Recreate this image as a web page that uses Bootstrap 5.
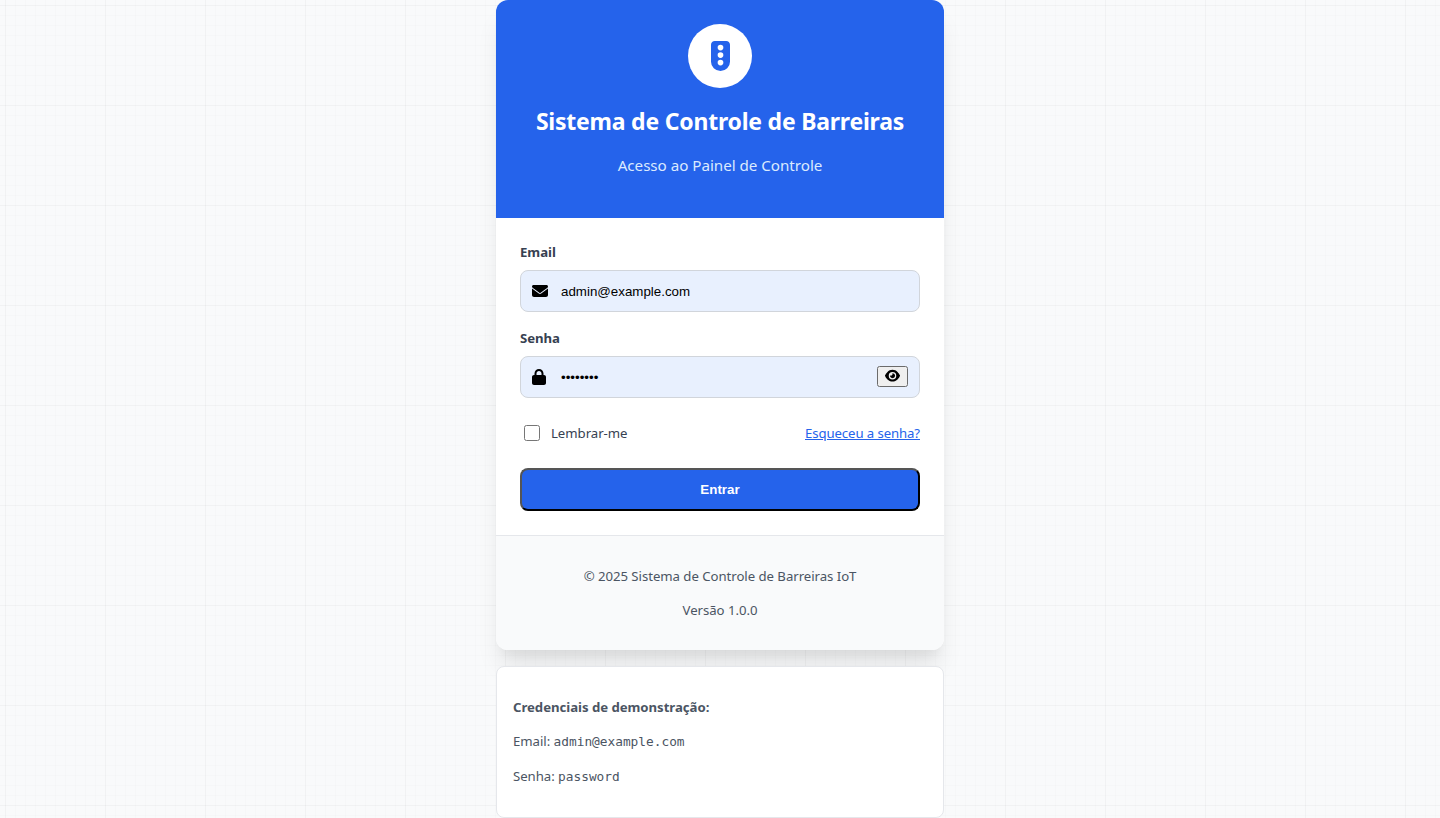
<!DOCTYPE html>
<html lang="pt-BR">
<head>
<meta charset="utf-8">
<meta name="viewport" content="width=device-width, initial-scale=1">
<title>Login - Sistema de Controle de Barreiras</title>
<link href="https://cdn.jsdelivr.net/npm/bootstrap@5.3.0/dist/css/bootstrap.min.css" rel="stylesheet">
<style>
  body {
    font-family: "Noto Sans", "Open Sans", sans-serif;
    font-size: 13.2px;
    letter-spacing: -.04px;
    line-height: 20px;
    color: #374151;
    background-color: #f9fafb;
    background-image:
      linear-gradient(rgba(0,0,0,.018) 1px, transparent 1px),
      linear-gradient(90deg, rgba(0,0,0,.018) 1px, transparent 1px),
      linear-gradient(rgba(0,0,0,.012) 1px, transparent 1px),
      linear-gradient(90deg, rgba(0,0,0,.012) 1px, transparent 1px);
    background-size: 100px 100px, 100px 100px, 10px 10px, 10px 10px;
    background-position: 5px 5px;
    overflow: hidden;
  }
  .login-wrap { width: 448px; }
  .login-card { border-radius: 12px; box-shadow: 0 20px 25px -5px rgba(0,0,0,.1), 0 10px 10px -5px rgba(0,0,0,.04); }
  .login-head { height: 218px; background: #2563eb; }
  .logo-circle { width: 64px; height: 64px; }
  .login-title { font-size: 23px; line-height: 32px; margin-top: 17px; letter-spacing: -.22px; white-space: nowrap; }
  .login-sub { font-size: 15.2px; line-height: 24px; color: #dbeafe; margin-top: 16px; letter-spacing: -.03px; }
  .login-body { height: 317px; }
  .field-label { line-height: 20px; margin-bottom: 8px; }
  .field-box { height: 42px; padding: 0 11px; background: #e8f0fe; border: 1px solid #d1d5db; border-radius: 8px; }
  .field-box svg.lead-icon { color: #000; }
  .field-box input { font: 13.333px "Liberation Sans", Arial, sans-serif; letter-spacing: 0; color: #000; background: transparent; outline: 0; }
  .icon-slot { width: 29px; }
  .eye-btn { width: 31px; height: 21px; margin-bottom: 2px; background: #efefef; border: 1px solid #6b6b6b; border-radius: 2.5px; color: #000; }
  .options-row { height: 20px; margin: 25px 0; }
  .remember-box { width: 16px; height: 16px; margin: 0 11px 0 4px; appearance: none; background: #fff; border: 1px solid #767676; border-radius: 2.5px; }
  .forgot { color: #2563eb; letter-spacing: -.1px; }
  .enter-btn { height: 43px; font: bold 13.333px "Liberation Sans", Arial, sans-serif; color: #fff; background: #2563eb; border: 2px solid; border-color: #555 #000 #000 #555; border-radius: 8px; }
  .login-foot { height: 115px; padding-top: 30px; color: #4b5563; background: #f9fafb; border-top: 1px solid #e5e7eb; }
  .demo-card { height: 152px; margin-top: 16px; padding: 30px 16px; color: #4b5563; border: 1px solid #e5e7eb; border-radius: 8px; }
  .mono { font-family: "DejaVu Sans Mono", monospace; font-size: 12.8px; letter-spacing: 0; }
  .line-gap { margin-bottom: 14px; }
</style>
</head>
<body>
<main class="login-wrap mx-auto">
  <div class="login-card overflow-hidden bg-white">
    <header class="login-head pt-4 text-center text-white">
      <div class="logo-circle mx-auto rounded-circle bg-white d-flex align-items-center justify-content-center">
        <svg width="19" height="30" viewBox="0 0 320 512" preserveAspectRatio="none"><path fill="#2563eb" fill-rule="evenodd" d="M64 0C28.700 0 0 28.700 0 64V352a160 160 0 0 0 320 0V64C320 28.700 291.300 0 256 0ZM160 64a48 48 0 1 1 0 96a48 48 0 1 1 0-96ZM160 192a48 48 0 1 1 0 96a48 48 0 1 1 0-96ZM160 320a48 48 0 1 1 0 96a48 48 0 1 1 0-96Z"/></svg>
      </div>
      <h1 class="login-title fw-bold mb-0">Sistema de Controle de Barreiras</h1>
      <p class="login-sub mb-0">Acesso ao Painel de Controle</p>
    </header>
    <form class="login-body p-4">
      <label class="field-label d-block fw-bold" for="email">Email</label>
      <div class="field-box d-flex align-items-center">
        <span class="icon-slot d-flex"><svg class="lead-icon" width="16" height="16" viewBox="0 0 512 512" fill="currentColor"><path d="M48 64C21.5 64 0 85.5 0 112c0 15.1 7.1 29.3 19.2 38.400L236.800 313.600c11.400 8.500 27 8.500 38.400 0L492.800 150.400c12.100-9.100 19.200-23.300 19.200-38.400 0-26.500-21.500-48-48-48ZM0 176V384c0 35.300 28.700 64 64 64H448c35.300 0 64-28.700 64-64V176L294.400 339.200c-22.800 17.100-54 17.100-76.800 0Z"/></svg></span>
        <input class="border-0 p-0 flex-grow-1" id="email" type="text" value="admin@example.com">
      </div>
      <label class="field-label d-block fw-bold mt-3" for="senha">Senha</label>
      <div class="field-box d-flex align-items-center">
        <span class="icon-slot d-flex"><svg class="lead-icon" width="14" height="16" viewBox="0 0 448 512" fill="currentColor"><path d="M144 144v48H304V144c0-44.200-35.800-80-80-80s-80 35.800-80 80ZM80 192V144C80 64.500 144.500 0 224 0s144 64.500 144 144v48h16c35.300 0 64 28.700 64 64V448c0 35.300-28.700 64-64 64H64c-35.300 0-64-28.700-64-64V256c0-35.300 28.700-64 64-64Z"/></svg></span>
        <input class="border-0 p-0 flex-grow-1" id="senha" type="password" value="password">
        <button class="eye-btn p-0 d-flex align-items-center justify-content-center" type="button" aria-label="Mostrar senha">
          <svg width="15" height="13.333" viewBox="0 0 576 512" fill="currentColor"><path d="M288 32c-80.800 0-145.500 36.800-192.600 80.600C48.600 156 17.300 208 2.500 243.700c-3.300 7.900-3.300 16.700 0 24.600C17.300 304 48.600 356 95.400 399.400 142.500 443.200 207.200 480 288 480s145.500-36.800 192.600-80.600c46.800-43.500 78.100-95.400 93-131.100 3.300-7.900 3.300-16.700 0-24.600-14.900-35.700-46.200-87.700-93-131.100C433.500 68.800 368.800 32 288 32ZM144 256a144 144 0 1 1 288 0 144 144 0 1 1-288 0Zm144-64c0 35.300-28.700 64-64 64-7.100 0-13.900-1.200-20.300-3.300-5.500-1.800-11.900 1.600-11.700 7.400 .3 6.900 1.300 13.800 3.200 20.700 13.700 51.200 66.400 81.600 117.600 67.900s81.600-66.400 67.900-117.600c-11.100-41.500-47.800-69.400-88.600-71.100-5.800-.2-9.200 6.100-7.400 11.700 2.100 6.400 3.300 13.200 3.300 20.300Z"/></svg>
        </button>
      </div>
      <div class="options-row d-flex align-items-center justify-content-between">
        <div class="d-flex align-items-center"><input class="remember-box" id="lembrar" type="checkbox"><label for="lembrar">Lembrar-me</label></div>
        <a class="forgot" href="#">Esqueceu a senha?</a>
      </div>
      <button class="enter-btn w-100 p-0 d-block" type="button">Entrar</button>
    </form>
    <footer class="login-foot text-center">
      <p class="line-gap">© 2025 Sistema de Controle de Barreiras IoT</p>
      <p class="mb-0">Versão 1.0.0</p>
    </footer>
  </div>
  <section class="demo-card bg-white">
    <p class="line-gap fw-bold">Credenciais de demonstração:</p>
    <p class="line-gap">Email: <span class="mono">admin@example.com</span></p>
    <p class="mb-0">Senha: <span class="mono">password</span></p>
  </section>
</main>
<script src="https://cdn.jsdelivr.net/npm/bootstrap@5.3.0/dist/js/bootstrap.bundle.min.js"></script>
</body>
</html>
